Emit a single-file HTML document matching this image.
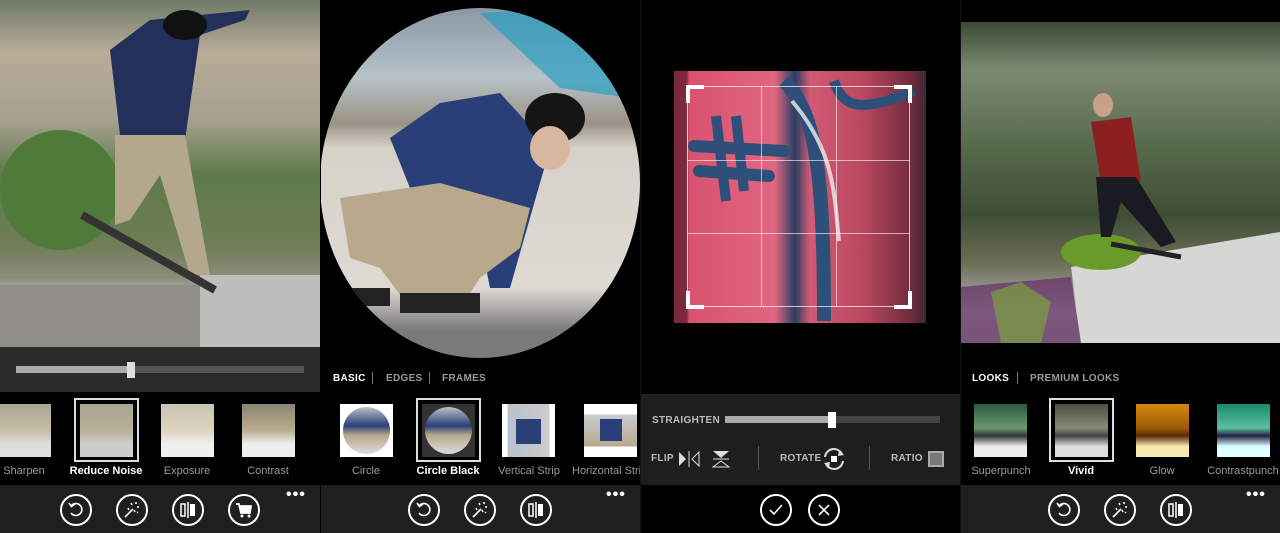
<!DOCTYPE html>
<html><head><meta charset="utf-8"><style>
*{margin:0;padding:0;box-sizing:border-box}
body{width:1280px;height:533px;background:#000;position:relative;overflow:hidden;font-family:"Liberation Sans",sans-serif}
.a{position:absolute}
.lbl{position:absolute;font-size:11px;color:#9a9a9a;text-align:center;width:90px}
.sel{color:#fff;font-weight:bold}
.tab{position:absolute;font-size:10px;font-weight:bold;color:#9a9a9a;letter-spacing:.3px}
.bar{position:absolute;top:485px;height:48px;background:#1f1f1f}
.ic{position:absolute;width:32px;height:32px;border:2px solid #fff;border-radius:50%;top:494px;color:#fff;display:flex;align-items:center;justify-content:center}
.dots{position:absolute;top:486px;color:#fff;font-size:16px;font-weight:bold;letter-spacing:1px}
.th{position:absolute;top:404px;width:53px;height:53px}
.fr{position:absolute;top:398px;width:65px;height:64px;border:2px solid #ddd}
</style></head><body>

<!-- PANEL 1 -->
<div class="a" style="left:0;top:0;width:320px;height:347px;background:linear-gradient(180deg,#6f7a68 0%,#b9ab98 15%,#a6a08e 35%,#5d7a4a 50%,#6e7d55 70%,#8a8c7a 80%,#b6b7b0 85%,#7d7c78 100%)"></div>
<svg class="a" style="left:0;top:0" width="320" height="347">
<ellipse cx="60" cy="190" rx="60" ry="60" fill="#4f7a3a"/>
<rect x="0" y="285" width="320" height="62" fill="#8f8e89"/>
<rect x="200" y="275" width="120" height="72" fill="#bdbdb9"/>
<path d="M110 50 L150 20 L200 15 L250 10 L245 20 L200 35 L185 140 L120 135 Z" fill="#23305a"/>
<ellipse cx="185" cy="25" rx="22" ry="15" fill="#111"/>
<path d="M115 135 L185 135 L210 275 L190 275 L160 175 L130 220 L115 225 Z" fill="#b3a78c"/>
<path d="M82 215 L215 290" stroke="#333" stroke-width="8"/>
</svg>
<div class="a" style="left:0;top:347px;width:320px;height:45px;background:#2b2b2b"></div>
<div class="a" style="left:16px;top:366px;width:288px;height:7px;background:#555"></div>
<div class="a" style="left:16px;top:366px;width:115px;height:7px;background:#aaa"></div>
<div class="a" style="left:127px;top:362px;width:8px;height:16px;background:#ddd"></div>
<div class="th" style="left:0;width:51px;background:linear-gradient(#a9a593,#c9bfa8 50%,#ddd 75%)"></div>
<div class="fr" style="left:74px"></div>
<div class="th" style="left:80px;background:linear-gradient(#a9a593,#b9af98 50%,#ccc 75%)"></div>
<div class="th" style="left:161px;background:linear-gradient(#c9c5b3,#ddd4c0 50%,#f0f0f0 75%)"></div>
<div class="th" style="left:242px;background:linear-gradient(#8a8573,#b9ad8f 50%,#eee 75%)"></div>
<div class="lbl" style="left:-21px;top:465px">Sharpen</div>
<div class="lbl sel" style="left:61px;top:465px">Reduce Noise</div>
<div class="lbl" style="left:142px;top:465px">Exposure</div>
<div class="lbl" style="left:223px;top:465px">Contrast</div>
<div class="bar" style="left:0;width:320px"></div>

<!-- PANEL 2 -->
<div class="a" style="left:321px;top:0;width:319px;height:392px;background:#000"></div>
<div class="a" style="left:320px;top:8px;width:320px;height:350px;border-radius:50%;overflow:hidden;background:linear-gradient(180deg,#8a98a6 0%,#b7c2c9 20%,#9a9284 33%,#d6d2c9 40%,#dedad3 80%,#7a7a7a 92%)">
<svg width="320" height="350"><path d="M70 130 L120 95 L180 85 L230 140 L210 210 L190 280 L170 280 L160 230 L110 230 Z" fill="#2a3f78"/><ellipse cx="235" cy="110" rx="30" ry="25" fill="#151515"/><ellipse cx="230" cy="140" rx="20" ry="22" fill="#d8b7a1"/><path d="M20 190 L120 175 L210 200 L200 240 L160 270 L140 300 L90 300 L60 260 L30 250 Z" fill="#b8a98c"/><rect x="80" y="285" width="80" height="20" fill="#222"/><rect x="20" y="280" width="50" height="18" fill="#222"/><path d="M160 5 L240 0 L300 30 L310 90 L240 80 Z" fill="#2a9ec0" opacity=".7"/></svg></div>
<div class="tab" style="left:333px;top:373px;color:#fff">BASIC</div>
<div class="a" style="left:372px;top:372px;width:1px;height:12px;background:#777"></div>
<div class="tab" style="left:386px;top:373px">EDGES</div>
<div class="a" style="left:429px;top:372px;width:1px;height:12px;background:#777"></div>
<div class="tab" style="left:442px;top:373px">FRAMES</div>
<div class="th" style="left:340px;background:#fff"><div style="margin:3px;width:47px;height:47px;border-radius:50%;background:linear-gradient(#b7c2c9,#2a3f78 40%,#b8a98c 60%,#ddd)"></div></div>
<div class="fr" style="left:416px"></div>
<div class="th" style="left:422px;background:#333"><div style="margin:3px;width:47px;height:47px;border-radius:50%;background:linear-gradient(#b7c2c9,#2a3f78 40%,#b8a98c 60%,#ddd)"></div></div>
<div class="th" style="left:502px;background:linear-gradient(90deg,#fff 10%,#b7c2c9 10%,#ccc 90%,#fff 90%)"><div style="margin:15px 14px;width:25px;height:25px;background:#2a3f78"></div></div>
<div class="th" style="left:584px;background:linear-gradient(#fff 20%,#c9ccd0 20%,#b8a98c 80%,#fff 80%)"><div style="margin:15px 16px;width:22px;height:22px;background:#2a3f78"></div></div>
<div class="lbl" style="left:321px;top:465px">Circle</div>
<div class="lbl sel" style="left:403px;top:465px">Circle Black</div>
<div class="lbl" style="left:484px;top:465px">Vertical Strip</div>
<div class="lbl" style="left:572px;top:465px;text-align:left;width:70px;overflow:hidden;white-space:nowrap">Horizontal Strip</div>
<div class="bar" style="left:321px;width:319px"></div>

<!-- PANEL 3 -->
<div class="a" style="left:674px;top:71px;width:252px;height:252px;background:linear-gradient(90deg,#7a2a3c 0%,#7a2a3c 5%,#d9526f 6%,#e16681 40%,#2a3e62 48%,#d25a74 54%,#b9485f 75%,#6e2a3a 95%,#3a2a3a)"></div>
<svg class="a" style="left:674px;top:71px" width="252" height="252">
<path d="M20 75 L110 80" stroke="#2d4f7a" stroke-width="12" stroke-linecap="round"/>
<path d="M25 100 L95 105" stroke="#2d4f7a" stroke-width="12" stroke-linecap="round"/>
<path d="M42 45 L52 130 M62 45 L70 120" stroke="#2d4f7a" stroke-width="10"/>
<path d="M110 10 C140 40 150 90 150 250" stroke="#2d4f7a" stroke-width="14" fill="none"/>
<path d="M160 10 C170 40 190 40 240 20" stroke="#2d4f7a" stroke-width="10" fill="none"/>
<path d="M118 30 C160 80 160 120 165 170" stroke="#eee" stroke-width="4" fill="none" opacity=".8"/>
</svg>
<div class="a" style="left:687px;top:86px;width:223px;height:221px;border:1px solid rgba(255,255,255,.7)"></div>
<div class="a" style="left:761px;top:86px;width:1px;height:221px;background:rgba(255,255,255,.6)"></div>
<div class="a" style="left:836px;top:86px;width:1px;height:221px;background:rgba(255,255,255,.6)"></div>
<div class="a" style="left:687px;top:160px;width:223px;height:1px;background:rgba(255,255,255,.6)"></div>
<div class="a" style="left:687px;top:233px;width:223px;height:1px;background:rgba(255,255,255,.6)"></div>
<div class="a" style="left:686px;top:85px;width:18px;height:18px;border-left:4px solid #fff;border-top:4px solid #fff"></div>
<div class="a" style="left:894px;top:85px;width:18px;height:18px;border-right:4px solid #fff;border-top:4px solid #fff"></div>
<div class="a" style="left:686px;top:291px;width:18px;height:18px;border-left:4px solid #fff;border-bottom:4px solid #fff"></div>
<div class="a" style="left:894px;top:291px;width:18px;height:18px;border-right:4px solid #fff;border-bottom:4px solid #fff"></div>
<div class="a" style="left:641px;top:394px;width:319px;height:91px;background:#1e1e1e"></div>
<div class="tab" style="left:652px;top:415px;color:#bbb">STRAIGHTEN</div>
<div class="a" style="left:725px;top:416px;width:215px;height:7px;background:#444"></div>
<div class="a" style="left:725px;top:416px;width:107px;height:7px;background:#aaa"></div>
<div class="a" style="left:828px;top:412px;width:8px;height:16px;background:#fff"></div>
<div class="tab" style="left:651px;top:453px;color:#bbb">FLIP</div>
<svg class="a" style="left:678px;top:449px" width="60" height="20"><path d="M1 3 L8 10 L1 17Z" fill="#ddd"/><path d="M11 2 V18" stroke="#ddd"/><path d="M21 3 L14 10 L21 17Z" fill="none" stroke="#ddd"/><path d="M35 2 H51 L43 9Z" fill="#ddd"/><path d="M35 10 H51" stroke="#ddd"/><path d="M35 18 H51 L43 12Z" fill="none" stroke="#ddd"/></svg>
<div class="a" style="left:758px;top:446px;width:1px;height:24px;background:#555"></div>
<div class="tab" style="left:780px;top:453px;color:#bbb">ROTATE</div>
<svg class="a" style="left:821px;top:447px" width="26" height="24"><path d="M4 10 A9 9 0 0 1 21 7" stroke="#ddd" stroke-width="2" fill="none"/><path d="M22 14 A9 9 0 0 1 5 17" stroke="#ddd" stroke-width="2" fill="none"/><path d="M18 3 L23 8 L17 9Z M8 21 L3 16 L9 15Z" fill="#ddd"/><rect x="10" y="9" width="6" height="6" fill="#fff"/></svg>
<div class="a" style="left:869px;top:446px;width:1px;height:24px;background:#555"></div>
<div class="tab" style="left:891px;top:453px;color:#bbb">RATIO</div>
<div class="a" style="left:928px;top:451px;width:16px;height:16px;background:#777;border:2px solid #aaa"></div>
<div class="ic" style="left:760px"><svg width="16" height="16"><path d="M2 8 L6 12 L14 3" stroke="#fff" stroke-width="1.6" fill="none"/></svg></div>
<div class="ic" style="left:808px"><svg width="14" height="14"><path d="M2 2 L12 12 M12 2 L2 12" stroke="#fff" stroke-width="1.6"/></svg></div>

<!-- PANEL 4 -->
<div class="a" style="left:961px;top:22px;width:319px;height:321px;background:linear-gradient(180deg,#3d4a33 0%,#7c8a72 15%,#55684a 40%,#3f4d35 60%,#6a6f55 75%,#8c8d86 82%,#c8c8c6 90%,#b5b5b3 100%)"></div>
<svg class="a" style="left:961px;top:22px" width="319" height="321">
<path d="M0 265 L110 255 L120 321 L0 321Z" fill="#6a3a6a" opacity=".8"/>
<path d="M30 270 L60 260 L90 280 L80 321 L40 321Z" fill="#7aa040" opacity=".7"/>
<path d="M110 245 L319 210 L319 321 L120 321Z" fill="#d6d6d4"/>
<ellipse cx="140" cy="230" rx="40" ry="18" fill="#6a9b2a"/>
<path d="M130 100 L170 95 L180 160 L140 160Z" fill="#8c1f1f"/>
<ellipse cx="142" cy="83" rx="10" ry="12" fill="#c9a088"/>
<path d="M135 155 L175 155 L215 220 L200 225 L160 180 L150 215 L140 215Z" fill="#1a1a22"/>
<path d="M150 222 L220 235" stroke="#222" stroke-width="5"/>
</svg>
<div class="tab" style="left:972px;top:373px;color:#fff">LOOKS</div>
<div class="a" style="left:1017px;top:372px;width:1px;height:12px;background:#777"></div>
<div class="tab" style="left:1030px;top:373px">PREMIUM LOOKS</div>
<div class="th" style="left:974px;background:linear-gradient(#2a5a40,#6a9a70 45%,#333 60%,#eee 80%)"></div>
<div class="fr" style="left:1049px"></div>
<div class="th" style="left:1055px;background:linear-gradient(#4a5040,#888a78 45%,#444 60%,#ddd 80%)"></div>
<div class="th" style="left:1136px;background:linear-gradient(#d08a10,#a05a08 45%,#5a2a08 60%,#f5e8b0 80%)"></div>
<div class="th" style="left:1217px;background:linear-gradient(#1a8a6a,#5ac0a0 45%,#224 60%,#dff 80%)"></div>
<div class="lbl" style="left:956px;top:465px">Superpunch</div>
<div class="lbl sel" style="left:1036px;top:465px">Vivid</div>
<div class="lbl" style="left:1117px;top:465px">Glow</div>
<div class="lbl" style="left:1198px;top:465px">Contrastpunch</div>
<div class="bar" style="left:961px;width:319px"></div>

<!-- separators -->
<div class="a" style="left:320px;top:0;width:1px;height:533px;background:#000"></div>
<div class="a" style="left:640px;top:0;width:1px;height:533px;background:#111"></div>
<div class="a" style="left:960px;top:0;width:1px;height:533px;background:#111"></div>

<!-- toolbar icons -->
<svg width="0" height="0" style="position:absolute"><defs>
<g id="undo"><path d="M5 6 A6 6 0 1 1 5 13" stroke="#fff" stroke-width="1.6" fill="none"/><path d="M3 3 L5.5 6.5 L9 4" stroke="#fff" stroke-width="1.6" fill="none"/></g>
<g id="wand"><path d="M3 17 L11 9" stroke="#fff" stroke-width="1.6"/><path d="M9 3 L10 5 M14 2 L14 4 M15 7 L17 7 M12 10 L13 12 M6 8 L7 10 M15 12 L16 13" stroke="#fff" stroke-width="1.5"/></g>
<g id="cmp"><path d="M3 4 H7 V16 H3Z" stroke="#fff" stroke-width="1.5" fill="none"/><path d="M10 2 V18" stroke="#fff" stroke-width="1.5"/><rect x="12" y="4" width="5" height="12" fill="#fff"/></g>
<g id="cart"><path d="M2 4 H5 L7 13 H16 L17 6 H6" stroke="#fff" stroke-width="1.8" fill="#fff"/><circle cx="8" cy="16" r="1.5" fill="#fff"/><circle cx="15" cy="16" r="1.5" fill="#fff"/></g>
</defs></svg>
<div class="ic" style="left:60px"><svg width="20" height="20"><use href="#undo"/></svg></div>
<div class="ic" style="left:116px"><svg width="20" height="20"><use href="#wand"/></svg></div>
<div class="ic" style="left:172px"><svg width="20" height="20"><use href="#cmp"/></svg></div>
<div class="ic" style="left:228px"><svg width="20" height="20"><use href="#cart"/></svg></div>
<div class="dots" style="left:286px">•••</div>
<div class="ic" style="left:408px"><svg width="20" height="20"><use href="#undo"/></svg></div>
<div class="ic" style="left:464px"><svg width="20" height="20"><use href="#wand"/></svg></div>
<div class="ic" style="left:520px"><svg width="20" height="20"><use href="#cmp"/></svg></div>
<div class="dots" style="left:606px">•••</div>
<div class="ic" style="left:1048px"><svg width="20" height="20"><use href="#undo"/></svg></div>
<div class="ic" style="left:1104px"><svg width="20" height="20"><use href="#wand"/></svg></div>
<div class="ic" style="left:1160px"><svg width="20" height="20"><use href="#cmp"/></svg></div>
<div class="dots" style="left:1246px">•••</div>
</body></html>
